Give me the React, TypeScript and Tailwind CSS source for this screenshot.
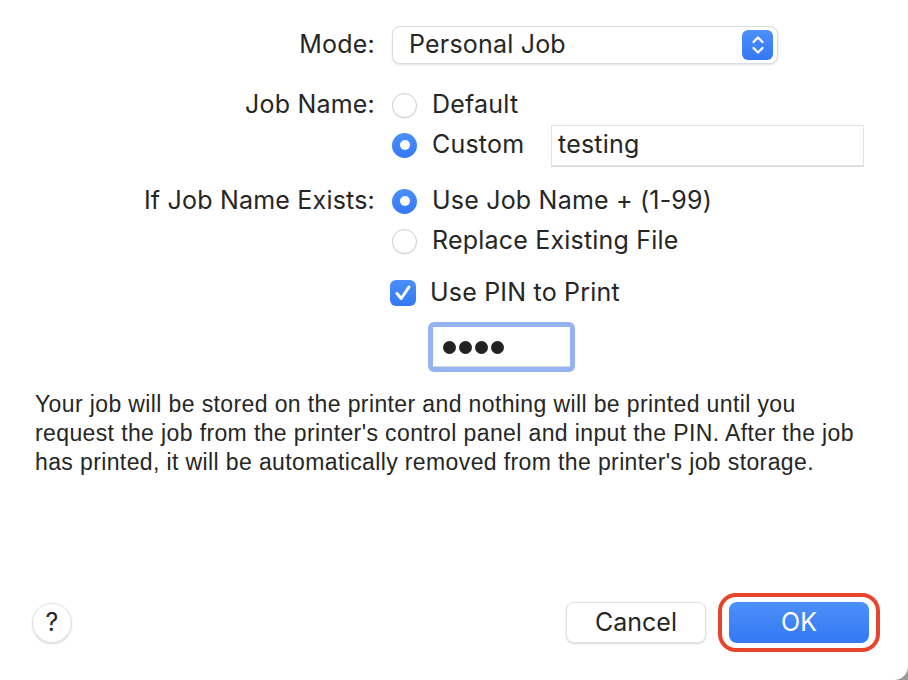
import React from "react";

function Radio({ checked }: { checked?: boolean }) {
  if (checked) {
    return (
      <span className="flex h-[25px] w-[25px] items-center justify-center rounded-full bg-[linear-gradient(#4b8ff8,#3479f6)]">
        <span className="h-[10px] w-[10px] rounded-full bg-white" />
      </span>
    );
  }
  return (
    <span className="h-[25px] w-[25px] rounded-full border border-[#cfcfcf] bg-white shadow-[0_1px_1px_rgba(0,0,0,0.08)]" />
  );
}

function Option({ checked, label }: { checked?: boolean; label: string }) {
  return (
    <div className="flex h-10 items-center gap-[15px]">
      <Radio checked={checked} />
      <span>{label}</span>
    </div>
  );
}

export default function App() {
  return (
    <div className="h-[680px] w-[908px] bg-[#9b9b9b]">
      <div
        className="flex h-full w-full flex-col rounded-br-[14px] bg-white text-[#262626]"
        style={{ fontFamily: "Inter, 'Liberation Sans', sans-serif" }}
      >
        <div className="grid grid-cols-[375px_1fr] gap-x-[17px] pt-[26px] text-[25px] tracking-[0.2px]">
          {/* Mode */}
          <div className="flex h-[38px] items-center justify-end">Mode:</div>
          <div className="flex h-[38px] w-[386px] items-center justify-between rounded-[8px] border border-[#dcdcdc] bg-white pl-[16px] pr-[4px] shadow-[0_1px_2px_rgba(0,0,0,0.12)]">
            <span>Personal Job</span>
            <span className="flex h-[30px] w-[31px] items-center justify-center rounded-[6px] bg-[linear-gradient(#4c90f8,#3478f6)]">
              <svg width="14" height="22" viewBox="0 0 14 22" fill="none" stroke="white" strokeWidth="2.2" strokeLinecap="round" strokeLinejoin="round">
                <path d="M2.5 8 L7 3.5 L11.5 8" />
                <path d="M2.5 14 L7 18.5 L11.5 14" />
              </svg>
            </span>
          </div>

          {/* Job Name */}
          <div className="mt-[21px] flex h-10 items-center justify-end">Job Name:</div>
          <div className="mt-[21px] flex flex-col">
            <Option label="Default" />
            <div className="flex h-10 items-center">
              <div className="flex w-[159px] items-center gap-[15px]">
                <Radio checked />
                <span>Custom</span>
              </div>
              <div className="flex h-[41px] w-[313px] items-center border border-[#e3e3e3] bg-white px-[6px] shadow-[0_1px_0_rgba(0,0,0,0.15)]">
                testing
              </div>
            </div>
          </div>

          {/* If Job Name Exists */}
          <div className="mt-4 flex h-10 items-center justify-end">If Job Name Exists:</div>
          <div className="mt-4 flex flex-col">
            <Option checked label="Use Job Name + (1-99)" />
            <Option label="Replace Existing File" />
            <div className="mt-3 flex h-10 items-center gap-[14px]">
              <span className="-ml-[2px] flex h-[26px] w-[26px] items-center justify-center rounded-[6px] bg-[linear-gradient(#4b8ff8,#3479f6)]">
                <svg width="20" height="20" viewBox="0 0 20 20" fill="none" stroke="white" strokeWidth="3" strokeLinecap="round" strokeLinejoin="round">
                  <path d="M4 10.5 L8.2 15.5 L16 4" />
                </svg>
              </span>
              <span>Use PIN to Print</span>
            </div>
            <div className="ml-[36px] mt-[9px] w-[147px] rounded-[6px] bg-[#95b3f3] p-[5px]">
              <div className="flex h-[40px] items-center gap-[3px] bg-white px-[10px] shadow-[inset_0_-1px_0_rgba(0,0,0,0.15)]">
                <span className="h-[13px] w-[13px] rounded-full bg-[#222]" />
                <span className="h-[13px] w-[13px] rounded-full bg-[#222]" />
                <span className="h-[13px] w-[13px] rounded-full bg-[#222]" />
                <span className="h-[13px] w-[13px] rounded-full bg-[#222]" />
              </div>
            </div>
          </div>
        </div>

        <p
          className="mt-[18px] whitespace-nowrap pl-[35px] text-[23px] leading-[29px] tracking-[0.38px]"
          style={{ fontFamily: "'Liberation Sans', sans-serif" }}
        >
          Your job will be stored on the printer and nothing will be printed until you
          <br />
          request the job from the printer's control panel and input the PIN. After the job
          <br />
          has printed, it will be automatically removed from the printer's job storage.
        </p>

        <div className="mt-auto flex items-center pb-[28px] pl-[32px] pr-[28px] text-[25px]">
          <div className="flex h-10 w-10 items-center justify-center rounded-full border border-[#e2e2e2] bg-white shadow-[0_1px_2px_rgba(0,0,0,0.15)]">
            ?
          </div>
          <div className="ml-auto flex h-[41px] w-[140px] items-center justify-center rounded-[8px] border border-[#e0e0e0] bg-white shadow-[0_1px_2px_rgba(0,0,0,0.15)]">
            Cancel
          </div>
          <div className="ml-[12px] rounded-[18px] border-[4px] border-[#e8442b] px-[7px] py-[5px]">
            <div className="flex h-[41px] w-[140px] items-center justify-center rounded-[8px] bg-[linear-gradient(#4c90f8,#3478f6)] text-white">
              OK
            </div>
          </div>
        </div>
      </div>
    </div>
  );
}
